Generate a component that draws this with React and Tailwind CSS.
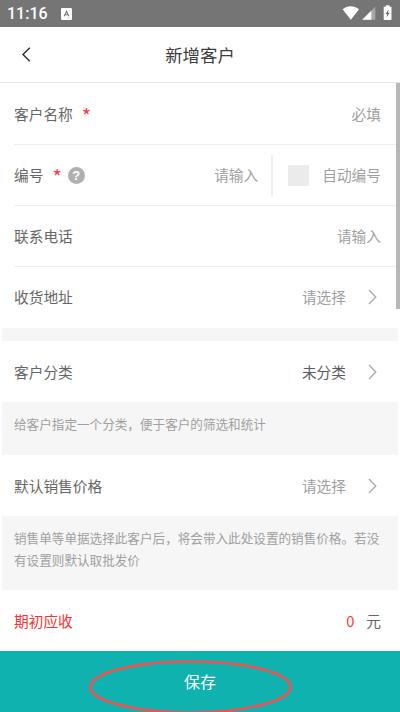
import React from 'react';

const ChevronRight = () => (
    <svg className="ml-[22px] mr-1 h-4 w-[9px] shrink-0" viewBox="0 0 9 16" fill="none" stroke="#a8a8a8" strokeWidth="1.3">
        <path d="M1 1l6.8 7L1 15" />
    </svg>
);

const Required = () => <span className="ml-[9px] pt-[3px] font-['Noto_Sans_CJK_SC',sans-serif] text-[20px] leading-none text-[#fb3b3b]">*</span>;

const Row = ({ label, children, className = 'text-[#666666]', border = true, pad = '' }) => (
    <div className="bg-white pl-[14px]">
        <div className={`flex h-[61px] items-center justify-between pr-[19px] ${pad} ${border ? 'border-b border-[#eeeeee]' : ''}`}>
            <div className={`flex items-center whitespace-nowrap ${className}`}>{label}</div>
            <div className="flex items-center whitespace-nowrap text-[#9f9f9f]">{children}</div>
        </div>
    </div>
);

const Hint = ({ children, className }) => (
    <div className={`mx-[2px] bg-[#f6f6f6] pl-[12px] pr-[14px] pt-[11px] text-[12.6px] leading-[22px] text-[#9f9f9f] ${className}`}>
        {children}
    </div>
);

const StatusBar = () => (
    <div className="flex h-[27px] items-center justify-between bg-[#757575] pl-[7px] pr-[7px] text-white">
        <div className="flex items-center">
            <span className="w-[54px] font-['Roboto'] text-[16px] font-medium leading-none">11:16</span>
            <svg className="h-3 w-[11px]" viewBox="0 0 11 12">
                <rect width="11" height="12" rx="1.2" fill="#fff" />
                <path d="M3.2 8.2L5.5 3.3l2.3 4.9M4 6.8h3" fill="none" stroke="#757575" strokeWidth="1.1" />
                <path d="M5.5 10.2h4" stroke="#ccc" strokeWidth="0.7" />
            </svg>
        </div>
        <svg className="mt-[-1px] h-[16px] w-[51px]" viewBox="0 0 51 16">
            <path d="M0.6 4.3C5.5 0.2 12 0.2 17 4.3L8.8 14.8z" fill="#fff" />
            <path d="M33.3 1.7V14.8H20.2z" fill="#a7a7a7" />
            <path d="M29.3 5.7V14.8H20.2z" fill="#fff" />
            <path d="M43.8 0.3h3.8v1.4h1.9v12.6a.8.8 0 0 1-.8.8h-6.2a.8.8 0 0 1-.8-.8V1.7h2.1z" fill="#fff" />
            <path d="M46.7 4.2L43.6 9h1.7l-.7 3.6 3-4.8h-1.7z" fill="#686868" />
        </svg>
    </div>
);

const App = () => {
    return (
        <div className="relative flex h-[712px] w-[400px] flex-col overflow-hidden bg-white font-['Noto_Sans_CJK_SC',sans-serif] text-[14.7px]">
            <StatusBar />

            {/* Header */}
            <div className="grid h-14 grid-cols-[60px_1fr_60px] items-center border-b border-[#e6e6e6]">
                <svg className="ml-[21px] h-[15px] w-[10px]" viewBox="0 0 10 15" fill="none" stroke="#333" strokeWidth="1.5">
                    <path d="M8.8 0.8L2 7.5l6.8 6.7" />
                </svg>
                <h1 className="pt-[1px] text-center text-[17.4px] text-[#3c3c3c]">新增客户</h1>
            </div>

            {/* Form */}
            <div className="flex-1 pt-[1px]">
                <Row label={<>客户名称<Required /></>}>必填</Row>
                <Row
                    label={
                        <>
                            编号<Required />
                            <span className="ml-[6px] flex h-[17px] w-[17px] items-center justify-center rounded-full bg-[#b0b0b0] font-['Liberation_Sans'] text-[13px] font-bold leading-none text-white">?</span>
                        </>
                    }
                >
                    <span>请输入</span>
                    <span className="ml-[13px] h-[41px] w-[2px] bg-[#efefef]"></span>
                    <span className="ml-[15px] mr-[13px] h-[21px] w-[21px] bg-[#ebebeb]"></span>
                    <span>自动编号</span>
                </Row>
                <Row label="联系电话">请输入</Row>
                <Row label="收货地址" border={false}>
                    请选择<ChevronRight />
                </Row>
                <div className="mx-[2px] h-[13px] bg-[#f6f6f6]"></div>

                <Row label="客户分类" border={false} pad="pt-[2px]">
                    <span className="text-[#5c5c5c]">未分类</span>
                    <ChevronRight />
                </Row>
                <Hint className="h-[53px]">给客户指定一个分类，便于客户的筛选和统计</Hint>

                <Row label="默认销售价格" border={false} pad="pt-[1px]">
                    请选择<ChevronRight />
                </Row>
                <Hint className="h-[74px]">销售单等单据选择此客户后，将会带入此处设置的销售价格。若没有设置则默认取批发价</Hint>

                <Row label="期初应收" className="text-[#fb3030]" border={false} pad="pt-[2px]">
                    <span className="text-[#fb3b3b]">0</span>
                    <span className="ml-[12px] text-[#666666]">元</span>
                </Row>
            </div>

            {/* Scroll thumb */}
            <div className="absolute right-0 top-[83px] h-[226px] w-1 bg-[#b8b8b8]"></div>

            <button className="flex h-[61px] items-center justify-center bg-[#0fb2ae] pb-[2px] text-[16px] text-white">
                保存
            </button>
            <svg className="pointer-events-none absolute left-[88px] top-[658px] h-[56px] w-[206px]" viewBox="0 0 206 56" fill="none">
                <ellipse cx="102.5" cy="29" rx="100" ry="25.5" stroke="#f94f4f" strokeWidth="2.6" />
            </svg>
        </div>
    );
};

export default App;
